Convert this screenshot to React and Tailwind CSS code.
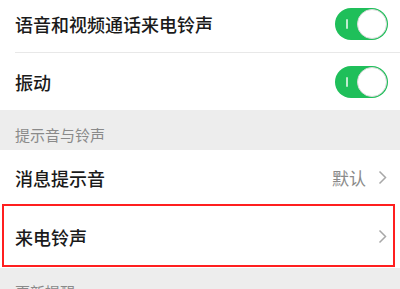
import React from 'react';

const font = { fontFamily: '"Noto Sans CJK SC", "Noto Sans", sans-serif' };

function Toggle() {
  return (
    <div className="relative w-[53px] h-[32px] rounded-full bg-[#1fbf5a] flex items-center justify-end pr-[1px]">
      <span className="absolute left-[11px] top-[11px] w-[2px] h-[10px] bg-[#bfeccf] rounded-full" />
      <span className="w-[30px] h-[30px] rounded-full bg-white border border-[#d9d9d9]" />
    </div>
  );
}

function Chevron() {
  return (
    <svg width="9" height="15" viewBox="0 0 9 15" fill="none">
      <path d="M1.5 1.5L7.5 7.5L1.5 13.5" stroke="#a8a8a8" strokeWidth="1.5" />
    </svg>
  );
}

export default function App() {
  return (
    <div className="w-[400px] h-[289px] overflow-hidden bg-[#ededed] text-[#1a1a1a]" style={font}>
      <div className="bg-white mt-[-5px]">
        <div className="h-[57px] pl-[15px] pr-[12px] flex items-center justify-between">
          <span className="text-[18px] leading-[24px] font-medium">语音和视频通话来电铃声</span>
          <Toggle />
        </div>
        <div className="ml-[15px] h-px bg-[#e8e8e8]" />
        <div className="h-[57px] pl-[15px] pr-[12px] flex items-center justify-between">
          <span className="text-[18px] leading-[24px] font-medium">振动</span>
          <Toggle />
        </div>
      </div>

      <div className="h-[40px] pl-[15px] pt-[15px] text-[15px] leading-[20px] text-[#8a8a8a]">提示音与铃声</div>

      <div className="bg-white">
        <div className="h-[55px] pl-[15px] pr-[13px] flex items-center justify-between">
          <span className="text-[18px] leading-[24px] font-medium">消息提示音</span>
          <div className="flex items-center gap-[12px]">
            <span className="text-[17px] leading-[24px] text-[#8a8a8a]">默认</span>
            <Chevron />
          </div>
        </div>
        <div className="relative h-[63px] pl-[15px] pr-[13px] flex items-center justify-between">
          <span className="text-[18px] leading-[24px] font-medium">来电铃声</span>
          <Chevron />
          <div className="absolute left-[2px] right-[5px] top-[-1px] h-[63px] border-2 border-[#ff1f1f]" />
        </div>
      </div>

      <div className="pl-[15px] pt-[14px] text-[15px] leading-[20px] text-[#8a8a8a]">更新提醒</div>
    </div>
  );
}
